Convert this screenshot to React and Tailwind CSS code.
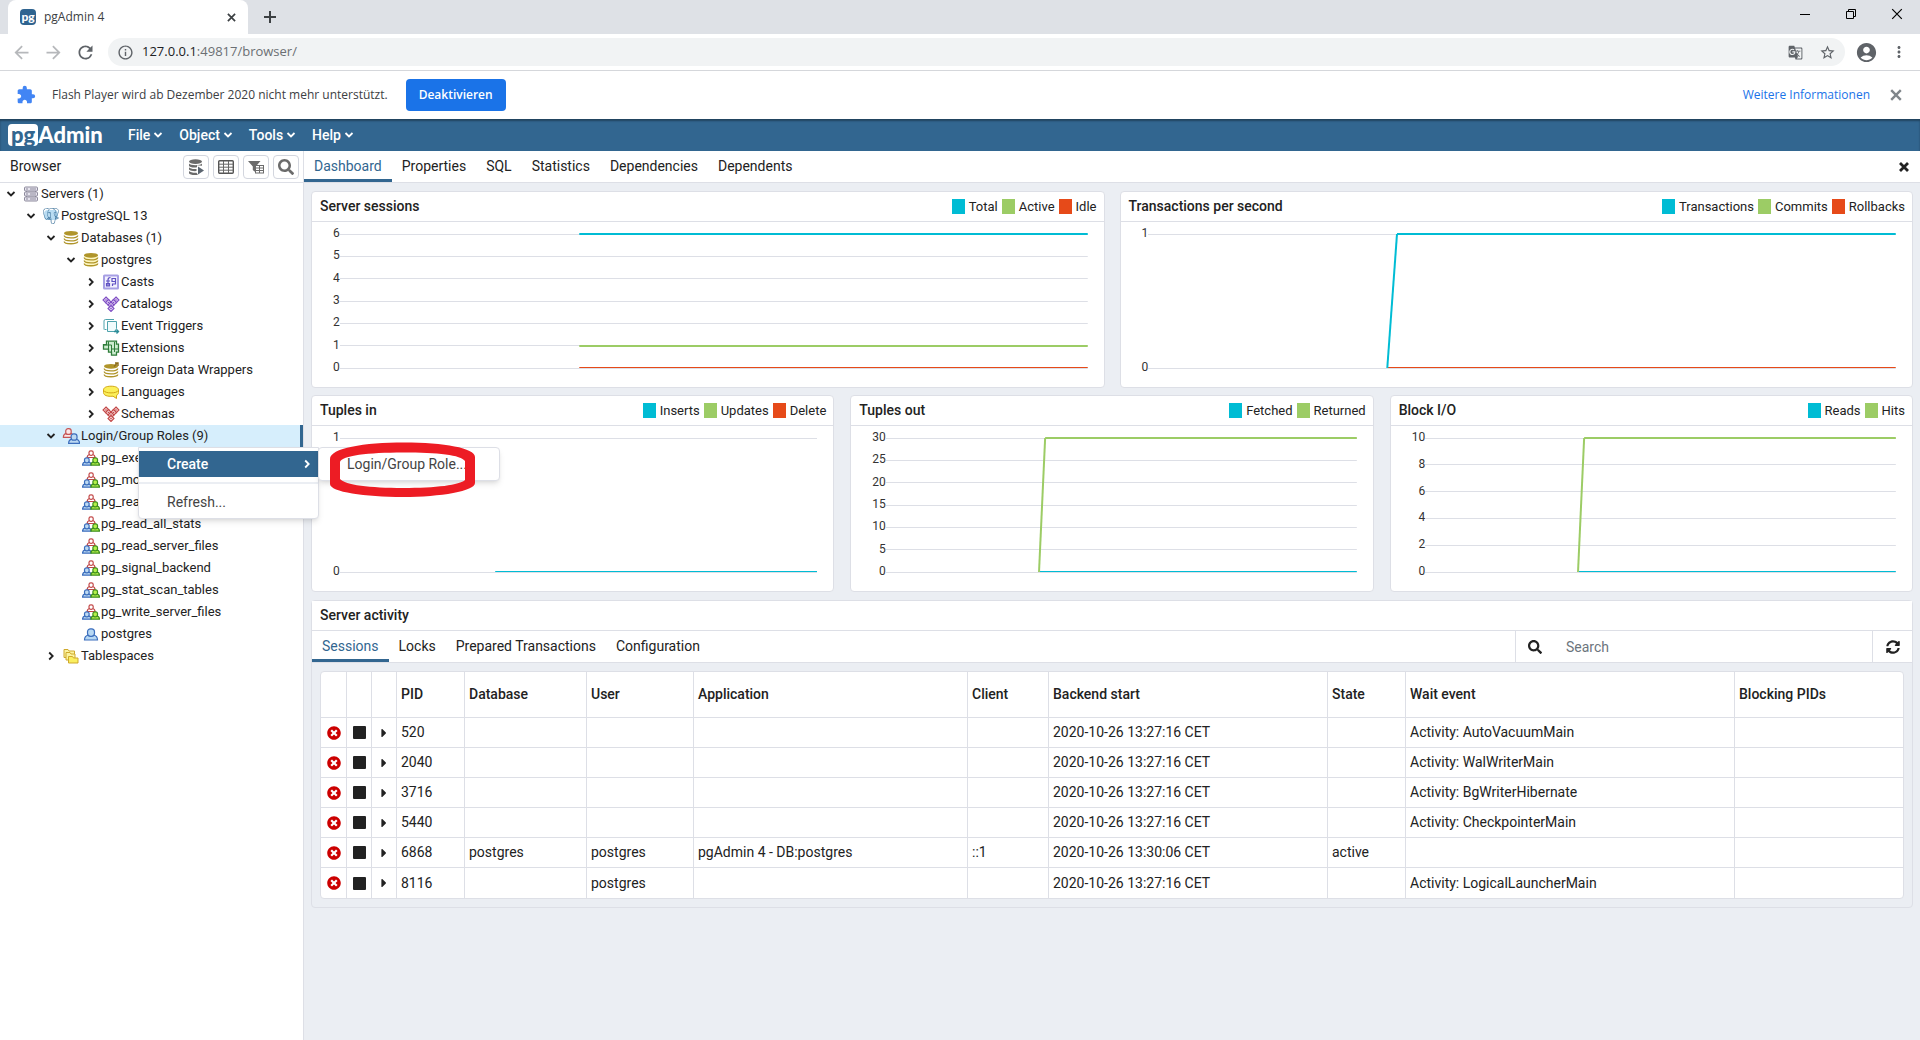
import React from "react";
import {
  MdArrowBack,
  MdArrowForward,
  MdRefresh,
  MdInfoOutline,
  MdStarBorder,
  MdAccountCircle,
  MdExtension,
  MdMoreVert,
  MdGTranslate,
} from "react-icons/md";
import { FaSearch, FaSyncAlt, FaTimesCircle, FaCaretRight } from "react-icons/fa";
import { SiPostgresql } from "react-icons/si";

const CYAN = "#00bcd4";
const GREEN = "#9ccc65";
const ORANGE = "#e64a19";

/* ---------- small drawings ---------- */

function Cross({ size = 10, stroke = 2, className = "" }) {
  return (
    <svg width={size} height={size} viewBox="0 0 10 10" className={className} aria-hidden="true">
      <path d="M1 1 9 9M9 1 1 9" stroke="currentColor" strokeWidth={stroke} fill="none" />
    </svg>
  );
}

function Chevron({ open, className = "" }) {
  return (
    <svg width="10" height="10" viewBox="0 0 10 10" className={className} aria-hidden="true">
      <path
        d={open ? "M1.5 3 5 6.5 8.5 3" : "M3.2 1.5 6.7 5 3.2 8.5"}
        stroke="currentColor"
        strokeWidth="1.8"
        fill="none"
      />
    </svg>
  );
}

function Glyph({ children }) {
  return (
    <svg width="18" height="16" viewBox="0 0 18 16" className="shrink-0" aria-hidden="true">
      {children}
    </svg>
  );
}

function Disks({ top = 1, light = false }) {
  return (
    <g>
      <path
        d={`M2.5 ${top + 2}v9.5c0 3 13 3 13 0v-9.5z`}
        fill={light ? "#fdf6bf" : "#fff"}
        stroke="none"
      />
      <ellipse cx="9" cy={top + 2.3} rx="7" ry="2.4" fill="#b0952b" />
      {[4.6, 7.6, 10.4].map((y) => (
        <path
          key={y}
          d={`M2.2 ${top + y}c0 3.1 13.6 3.1 13.6 0`}
          stroke="#b0952b"
          strokeWidth="1.3"
          fill="none"
        />
      ))}
    </g>
  );
}

function Person({ x, y, s = 1, stroke, fill }) {
  return (
    <g transform={`translate(${x} ${y}) scale(${s})`} stroke={stroke} fill={fill} strokeWidth={1.2 / s}>
      <path d="M0.500 12c0-3 1.500-4.500 4-5h5c2.500.5 4 2 4 5z" />
      <rect x="3.500" y="0.800" width="7" height="7.500" rx="3" />
    </g>
  );
}

function Diamonds({ stroke, fill }) {
  const spots = [
    [4, 4],
    [14, 4],
    [6.5, 6.5],
    [11.5, 6.5],
    [9, 9],
    [9, 12.5],
  ];
  return (
    <g fill={fill} stroke={stroke} strokeWidth="1.1">
      {spots.map(([x, y]) => (
        <path key={`${x}-${y}`} d={`M${x} ${y - 3}l3 3-3 3-3-3z`} />
      ))}
      {spots.map(([x, y]) => (
        <circle key={`${x}.${y}`} cx={x} cy={y} r="0.8" fill={stroke} stroke="none" />
      ))}
    </g>
  );
}

const treeIcons = {
  servers: (
    <Glyph>
      <path d="M4.500 2v12M13.500 2v12" stroke="#8d8a9c" />
      {[0.5, 5.5, 10.5].map((y) => (
        <g key={y}>
          <rect x="2.500" y={y + 0.5} width="13" height="4" rx="1" fill="#e6e4ee" stroke="#8d8a9c" />
          <path d={`M4 ${y + 2.5}h2M8 ${y + 2.5}h6`} stroke="#8d8a9c" />
        </g>
      ))}
    </Glyph>
  ),
  elephant: (
    <span className="relative flex h-4 w-[18px] shrink-0 items-center justify-center text-[#2f6792]">
      <span className="absolute inset-x-0.5 top-0.5 h-2.5 rounded bg-[#b9dcf2]" />
      <SiPostgresql size={16} className="relative" />
    </span>
  ),
  databases: (
    <Glyph>
      <Disks />
    </Glyph>
  ),
  database: (
    <Glyph>
      <Disks light />
    </Glyph>
  ),
  casts: (
    <Glyph>
      <rect x="1" y="0.500" width="16" height="15" rx="1.500" fill="#a79fe4" />
      <rect x="3" y="2.500" width="12" height="11" fill="#f3f1fd" />
      <path
        d="M8.500 3.500c-2 0-2.500 1-2.500 2.500v5.500M4 7h4M4.500 9.500h3v2.500h-3zM10 4.500h3.500v3h-3.500zM13.500 7.500v2.500h-3v2"
        stroke="#5f51c2"
        strokeWidth="1.200"
        fill="none"
      />
    </Glyph>
  ),
  catalogs: (
    <Glyph>
      <Diamonds stroke="#7f4fc3" fill="#e4d4f7" />
    </Glyph>
  ),
  events: (
    <Glyph>
      <path d="M12 1.500H3.500Q2 1.500 2 3v8.500M2.500 11.500h2" stroke="#4fa3ad" fill="none" />
      <path d="M5.500 3.500h9v7l-1.500 3h-7.500z" fill="#f0fbfc" stroke="#4fa3ad" />
      <path d="M12 13.500h4M14.500 11.500l2 2-2 2" stroke="#2b8c98" strokeWidth="1.400" fill="none" />
    </Glyph>
  ),
  extensions: (
    <Glyph>
      <path
        d="M4.500 1.200h10v3h2v8h-2v3h-5v-3h-3v-3h-5v-4.500h3z"
        fill="#cdeccf"
        stroke="#2f7d3a"
        strokeWidth="1.300"
      />
      <path d="M1.500 5h8M6.500 1.500v8M9.500 5v7M9.500 9h6.500M12.500 2v10" stroke="#2f7d3a" fill="none" />
    </Glyph>
  ),
  wrappers: (
    <Glyph>
      <Disks top={2} />
      <path d="M12 4.500l3-3M13 1h3v3" stroke="#8d6d1c" strokeWidth="1.400" fill="none" />
    </Glyph>
  ),
  languages: (
    <Glyph>
      <path
        d="M9 2.200c5 0 7.500 1.500 7.500 3.800v2.500c0 1.500-.8 2.200-2 2.800v3.200l-3.500-2.300c-6 .6-9.500-1-9.500-3.700v-2.500c0-2.300 2.500-3.800 7.500-3.800z"
        fill="#fcf05a"
        stroke="#d3a818"
      />
      <path d="M1.800 6.500c1 3.200 13.400 3.200 14.400 0" stroke="#d3a818" fill="none" />
    </Glyph>
  ),
  schemas: (
    <Glyph>
      <Diamonds stroke="#c24848" fill="#f9dada" />
    </Glyph>
  ),
  roles: (
    <Glyph>
      <Person x={1} y={0} s={0.78} stroke="#c45454" fill="#fbe6e6" />
      <Person x={6.2} y={5.2} s={0.84} stroke="#3c6ebd" fill="#bcd9f2" />
    </Glyph>
  ),
  group: (
    <Glyph>
      <path d="M5 7l4-1.500 4 1.500" stroke="#c24848" fill="none" />
      <Person x={4.9} y={0.3} s={0.6} stroke="#c24848" fill="#fff" />
      <Person x={0.2} y={7.3} s={0.66} stroke="#3c6ebd" fill="#bcd9f2" />
      <Person x={8.6} y={7.3} s={0.66} stroke="#3f8f1f" fill="#b4f04a" />
    </Glyph>
  ),
  user: (
    <Glyph>
      <Person x={2} y={2} s={1} stroke="#3c6ebd" fill="#b7d8f3" />
    </Glyph>
  ),
  tablespaces: (
    <Glyph>
      <path d="M2 1.500h4l1 1.500h5.500v6.500H2z" fill="#fbf3a0" stroke="#cfa92c" />
      <path d="M4 4.500h4l1 1.500h4v6H4z" fill="#fbf3a0" stroke="#cfa92c" />
      <path d="M6.500 8.500h4l1 1.500h4.500v5H6.500z" fill="#faef60" stroke="#cfa92c" />
    </Glyph>
  ),
};

/* ---------- browser chrome ---------- */

function TitleBar() {
  return (
    <header className="flex h-[34px] items-start justify-between bg-[#dee1e6] pl-2">
      <div className="flex h-full items-center">
        <div className="flex h-full w-60 items-center rounded-t-lg bg-white px-3">
          <span className="flex size-4 items-center justify-center rounded-sm bg-[#2f6490] font-[Lato] text-[12px] leading-none font-black text-white">
            pg
          </span>
          <span className="ml-2 flex-1 text-[12px] text-[#3c4043]">pgAdmin 4</span>
          <button type="button" aria-label="Tab schließen" className="text-[#3c4043]">
            <Cross size={9} stroke={1.9} />
          </button>
        </div>
        <button type="button" aria-label="Neuer Tab" className="ml-4 text-[#3c4043]">
          <svg width="12" height="12" viewBox="0 0 12 12" aria-hidden="true">
            <path d="M6 0v12M0 6h12" stroke="currentColor" strokeWidth="2" />
          </svg>
        </button>
      </div>
      <div className="flex h-7 items-center text-black">
        <button type="button" aria-label="Minimieren" className="flex w-[46px] justify-center">
          <svg width="10" height="10" aria-hidden="true">
            <path d="M0 5.500h10" stroke="currentColor" />
          </svg>
        </button>
        <button type="button" aria-label="Wiederherstellen" className="flex w-[46px] justify-center">
          <svg width="10" height="10" aria-hidden="true">
            <path d="M.5 2.500h7v7h-7zM2.500 2.500v-2h7v7h-2" stroke="currentColor" fill="none" />
          </svg>
        </button>
        <button type="button" aria-label="Schließen" className="flex w-[46px] justify-center">
          <Cross size={12} stroke={1} />
        </button>
      </div>
    </header>
  );
}

function AddressBar() {
  return (
    <div className="flex h-[37px] items-center border-b border-[#d5d7db] bg-white pr-3 pl-[11px] text-[#5f6368]">
      <button type="button" aria-label="Zurück" className="text-[#b6b8bb]">
        <MdArrowBack size={21} />
      </button>
      <button type="button" aria-label="Vorwärts" className="ml-[11px] text-[#b6b8bb]">
        <MdArrowForward size={21} />
      </button>
      <button type="button" aria-label="Neu laden" className="ml-[11px]">
        <MdRefresh size={21} />
      </button>
      <div className="ml-3 flex h-7 flex-1 items-center rounded-full bg-[#f1f3f4] px-[9px]">
        <MdInfoOutline size={17} />
        <a href="#browser" className="ml-2 flex-1 text-[13px] text-[#6b6f73]">
          <span className="text-[#202124]">127.0.0.1</span>:49817/browser/
        </a>
        <button type="button" aria-label="Übersetzen">
          <MdGTranslate size={15} />
        </button>
        <button type="button" aria-label="Lesezeichen" className="ml-4">
          <MdStarBorder size={17} />
        </button>
      </div>
      <button type="button" aria-label="Profil" className="ml-[10px]">
        <MdAccountCircle size={23} />
      </button>
      <button type="button" aria-label="Menü" className="ml-3">
        <MdMoreVert size={18} />
      </button>
    </div>
  );
}

function InfoBar() {
  return (
    <div className="flex h-12 items-center bg-white pr-[18px] pl-4 text-[12px]">
      <MdExtension size={20} className="text-[#4285f4]" />
      <span className="ml-4 text-[#3c4043]">
        Flash Player wird ab Dezember 2020 nicht mehr unterstützt.
      </span>
      <button type="button" className="ml-[18px] h-8 rounded bg-[#1a73e8] px-[13px] font-semibold text-white">
        Deaktivieren
      </button>
      <a href="#info" className="ml-auto text-[#1a73e8]">
        Weitere Informationen
      </a>
      <button type="button" aria-label="Hinweis schließen" className="ml-5 text-[#80868b]">
        <Cross size={12} stroke={2} />
      </button>
    </div>
  );
}

function AppMenu() {
  return (
    <nav
      aria-label="pgAdmin"
      className="flex h-8 items-center bg-[#326690] pl-2 text-[14px] font-medium text-white shadow-[inset_0_2px_2px_rgba(0,0,0,0.35)]"
    >
      <a href="#home" className="mr-[16px] flex w-24 items-center font-[Lato] text-[22px] leading-[22px] font-black">
        <span className="rounded bg-white px-[3px] text-[#326690]">pg</span>
        <span>Admin</span>
      </a>
      {["File", "Object", "Tools", "Help"].map((m) => (
        <button type="button" key={m} className="flex items-center gap-[3px] px-2">
          {m}
          <Chevron open />
        </button>
      ))}
    </nav>
  );
}

/* ---------- object tree ---------- */

const toolButtons = [
  [
    "Query tool",
    <svg width="16" height="16" viewBox="0 0 16 16" key="q" aria-hidden="true">
      <ellipse cx="7.500" cy="2.600" rx="6.500" ry="2.300" fill="#6b6b6b" />
      <path
        d="M1 4.500c1 2.200 12 2.200 13 0v2.300l-5-.5v2c-4 .6-7.500-.2-8-1.300zM1 8.200c1 1.600 4.500 2 7.500 1.700v2.200c-3 .2-6.500-.2-7.500-1.600zM1 12c1 1.500 4.500 1.800 7.500 1.700l1.500 2c-4 .6-8.500.1-9-1.500z"
        fill="#6b6b6b"
      />
      <path d="M10 7.500l6 4-6 4z" fill="#5b6570" />
    </svg>,
  ],
  [
    "View data",
    <svg width="16" height="14" viewBox="0 0 16 14" key="v" aria-hidden="true">
      <rect x=".7" y=".7" width="14.600" height="12.600" rx="1" fill="none" stroke="#555" strokeWidth="1.400" />
      <path d="M1 4.200h14M1 7.200h14M1 10.200h14M5.500 1v12M10.500 1v12" stroke="#666" />
    </svg>,
  ],
  [
    "Filtered rows",
    <svg width="16" height="14" viewBox="0 0 16 14" key="f" aria-hidden="true">
      <path d="M0 1h12.500L7.800 6.500v6L4.800 10V6.500z" fill="#6b6b6b" />
      <rect x="7.500" y="5.500" width="8" height="7.500" fill="#fff" stroke="#6b6b6b" />
      <path d="M8 8h7M8 10.500h7M11.500 6v7" stroke="#6b6b6b" />
    </svg>,
  ],
  ["Search objects", <FaSearch size={16} key="s" color="#6b6b6b" />],
];

const tree = [
  [0, "servers", "Servers (1)", true],
  [1, "elephant", "PostgreSQL 13", true],
  [2, "databases", "Databases (1)", true],
  [3, "database", "postgres", true],
  [4, "casts", "Casts", false],
  [4, "catalogs", "Catalogs", false],
  [4, "events", "Event Triggers", false],
  [4, "extensions", "Extensions", false],
  [4, "wrappers", "Foreign Data Wrappers", false],
  [4, "languages", "Languages", false],
  [4, "schemas", "Schemas", false],
  [2, "roles", "Login/Group Roles (9)", true, true],
  [3, "group", "pg_execute_server_program"],
  [3, "group", "pg_monitor"],
  [3, "group", "pg_read_all_settings"],
  [3, "group", "pg_read_all_stats"],
  [3, "group", "pg_read_server_files"],
  [3, "group", "pg_signal_backend"],
  [3, "group", "pg_stat_scan_tables"],
  [3, "group", "pg_write_server_files"],
  [3, "user", "postgres"],
  [2, "tablespaces", "Tablespaces", false],
];

function ContextMenu() {
  return (
    <div className="absolute top-full left-[138px] z-20 w-[181px] rounded-b border border-[#dddfe6] bg-white py-[3px] text-[14px] text-[#444] shadow-md">
      <button
        type="button"
        className="flex h-[26px] w-full items-center justify-between bg-[#326690] pr-1.5 pl-7 font-medium text-white"
      >
        Create
        <Chevron />
      </button>
      <hr className="my-[5px] border-t-2 border-[#ebeef3]" />
      <button type="button" className="mt-1 flex h-[26px] w-full items-center pl-7">
        Refresh...
      </button>
      <div className="absolute -top-px left-full w-[182px] rounded border border-[#dddfe6] bg-white py-[3px] shadow-md">
        <button type="button" className="flex h-[26px] w-full items-center pl-7">
          Login/Group Role...
        </button>
        <svg
          width="146"
          height="56"
          viewBox="0 0 146 56"
          className="pointer-events-none absolute -top-1.5 left-[11px]"
          aria-hidden="true"
        >
          <path
            fillRule="evenodd"
            fill="#ed1c24"
            d="M0 17C0 6 34 .5 74 .5S145 6 145 15v26c0 8-34 14-72 14S0 50 0 42zM10 20v17c5 6 30 9 63 9s57-3 62-8V19c-4-6-27-8.500-62-8.500S12 13.500 10 20z"
          />
        </svg>
      </div>
    </div>
  );
}

const indents = ["pl-0", "pl-5", "pl-10", "pl-[60px]", "pl-20"];

function TreeRow({ level, icon, label, open, selected }) {
  return (
    <li
      className={
        selected
          ? "relative border-r-[3px] border-[#326690] bg-[#d6eefc]"
          : "border-r-[3px] border-transparent"
      }
    >
      <button type="button" className={`flex h-[22px] w-full items-center ${indents[level]}`}>
        <span className="flex w-[22px] shrink-0 justify-center">
          {open !== undefined && <Chevron open={open} />}
        </span>
        {treeIcons[icon]}
        <span className="ml-px whitespace-nowrap">{label}</span>
      </button>
      {selected && <ContextMenu />}
    </li>
  );
}

function Sidebar() {
  return (
    <aside className="w-[304px] shrink-0 border-r border-[#dddfe6] bg-white">
      <div className="flex h-8 items-center gap-1 border-b border-[#dddfe6] pr-1 pl-[10px]">
        <h2 className="flex-1 text-[14px]">Browser</h2>
        {toolButtons.map(([name, icon]) => (
          <button
            type="button"
            key={name}
            aria-label={name}
            className="flex h-6 w-[26px] items-center justify-center rounded border border-[#d3d6de]"
          >
            {icon}
          </button>
        ))}
      </div>
      <ul className="text-[13px]">
        {tree.map(([level, icon, label, open, selected], i) => (
          <TreeRow key={i} level={level} icon={icon} label={label} open={open} selected={selected} />
        ))}
      </ul>
    </aside>
  );
}

/* ---------- dashboard ---------- */

function Tabs({ items, label }) {
  return (
    <div role="tablist" aria-label={label} className="flex h-full text-[14px]">
      {items.map((t, i) => (
        <button
          type="button"
          role="tab"
          aria-selected={i === 0}
          key={t}
          className={
            i === 0
              ? "border-b-[3px] border-[#326690] px-[10px] pt-[2px] text-[#326690]"
              : "border-b-[3px] border-transparent px-[10px] pt-[2px]"
          }
        >
          {t}
        </button>
      ))}
    </div>
  );
}

const TOP = 7;
const SPAN = 134;

function ChartCard({ title, legend, ticks, children }) {
  return (
    <section className="h-[197px] rounded border border-[#dddfe6] bg-white">
      <div className="flex h-[30px] items-center justify-between border-b border-[#dddfe6] pr-[7px] pl-2 text-[13px]">
        <h3 className="text-[14px] font-medium">{title}</h3>
        <ul className="flex gap-1">
          {legend.map(([name, box]) => (
            <li key={name} className="flex items-center gap-1">
              <span className={`h-[15px] w-[13px] ${box}`} />
              {name}
            </li>
          ))}
        </ul>
      </div>
      <div className="flex pt-[5px] pr-4 pl-[21px]">
        <div className="flex h-[146px] flex-col justify-between text-right text-[12px] leading-3 text-[#333]">
          {ticks.map((t) => (
            <span key={t}>{t}</span>
          ))}
        </div>
        <svg className="h-[146px] min-w-0 flex-1" role="img" aria-label={title}>
          {ticks.map((t, i) => {
            const y = TOP + 0.5 + Math.floor((i * SPAN) / (ticks.length - 1));
            return <line key={t} x1="0" x2="100%" y1={y} y2={y} stroke="#dddfe6" />;
          })}
          {children}
        </svg>
      </div>
    </section>
  );
}

function Flat({ from, y, color, width = 2 }) {
  return <line x1={from} x2="100%" y1={y} y2={y} stroke={color} strokeWidth={width} />;
}

function Rise({ from, to, color }) {
  return (
    <>
      <line x1={from} x2={to} y1={TOP + SPAN} y2={TOP} stroke={color} strokeWidth="2" />
      <Flat from={to} y={TOP} color={color} />
    </>
  );
}

const CY = "bg-[#00bcd4]";
const GR = "bg-[#9ccc65]";
const OR = "bg-[#e64a19]";

const columns = [
  ["", "w-[26px]"],
  ["", "w-[25px]"],
  ["", "w-[25px]"],
  ["PID", "w-[68px]"],
  ["Database", "w-[122px]"],
  ["User", "w-[107px]"],
  ["Application", "w-[274px]"],
  ["Client", "w-[81px]"],
  ["Backend start", "w-[279px]"],
  ["State", "w-[78px]"],
  ["Wait event", "w-[329px]"],
  ["Blocking PIDs", ""],
];

const start = "2020-10-26 13:27:16 CET";
const rows = [
  ["520", "", "", "", "", start, "", "Activity: AutoVacuumMain", ""],
  ["2040", "", "", "", "", start, "", "Activity: WalWriterMain", ""],
  ["3716", "", "", "", "", start, "", "Activity: BgWriterHibernate", ""],
  ["5440", "", "", "", "", start, "", "Activity: CheckpointerMain", ""],
  ["6868", "postgres", "postgres", "pgAdmin 4 - DB:postgres", "::1", "2020-10-26 13:30:06 CET", "active", "", ""],
  ["8116", "", "postgres", "", "", start, "", "Activity: LogicalLauncherMain", ""],
];

const iconCell = "border-r border-b border-[#dddfe6] group-last:border-b-0";

function ActivityTable() {
  return (
    <div className="m-2 overflow-hidden rounded border border-[#dddfe6] bg-white">
      <table className="w-full table-fixed border-separate border-spacing-0 text-left text-[14px]">
        <colgroup>
          {columns.map(([, w], i) => (
            <col key={i} className={w} />
          ))}
        </colgroup>
        <thead>
          <tr className="h-[46px]">
            {columns.map(([name], i) => (
              <th
                key={i}
                scope="col"
                className="border-r border-b border-[#dddfe6] px-1 font-medium last:border-r-0"
              >
                {name}
              </th>
            ))}
          </tr>
        </thead>
        <tbody>
          {rows.map((r) => (
            <tr key={r[0]} className="group h-[30px]">
              <td className={iconCell}>
                <button type="button" aria-label={`Terminate ${r[0]}`} className="flex w-full justify-center text-[#c00]">
                  <FaTimesCircle size={14} />
                </button>
              </td>
              <td className={iconCell}>
                <button type="button" aria-label={`Cancel ${r[0]}`} className="flex w-full justify-center">
                  <span className="size-[13px] rounded-[1px] bg-[#222]" />
                </button>
              </td>
              <td className={iconCell}>
                <button type="button" aria-label={`Details ${r[0]}`} className="flex w-full justify-center">
                  <FaCaretRight size={14} />
                </button>
              </td>
              {r.map((c, i) => (
                <td
                  key={i}
                  className="overflow-hidden border-r border-b border-[#dddfe6] px-1 whitespace-nowrap group-last:border-b-0 last:border-r-0"
                >
                  {c}
                </td>
              ))}
            </tr>
          ))}
        </tbody>
      </table>
    </div>
  );
}

function Dashboard() {
  return (
    <main className="flex min-w-0 flex-1 flex-col">
      <div className="flex h-8 items-center justify-between border-b border-[#dddfe6] bg-white pr-[11px]">
        <Tabs
          label="Main"
          items={["Dashboard", "Properties", "SQL", "Statistics", "Dependencies", "Dependents"]}
        />
        <button type="button" aria-label="Close panel">
          <Cross size={10} stroke={2.8} />
        </button>
      </div>
      <div className="px-[7px] pt-2">
        <div className="mb-[7px] grid grid-cols-2 gap-[15px]">
          <ChartCard
            title="Server sessions"
            legend={[["Total", CY], ["Active", GR], ["Idle", OR]]}
            ticks={[6, 5, 4, 3, 2, 1, 0]}
          >
            <Flat from="32%" y={TOP} color={CYAN} />
            <Flat from="32%" y={TOP + 112} color={GREEN} />
            <Flat from="32%" y={TOP + SPAN - 0.5} color={ORANGE} width={1} />
          </ChartCard>
          <ChartCard
            title="Transactions per second"
            legend={[["Transactions", CY], ["Commits", GR], ["Rollbacks", OR]]}
            ticks={[1, 0]}
          >
            <Flat from="32%" y={TOP + SPAN - 0.5} color={ORANGE} width={1} />
            <Rise from="32%" to="33.3%" color={CYAN} />
          </ChartCard>
        </div>
        <div className="mb-2 grid grid-cols-3 gap-4">
          <ChartCard
            title="Tuples in"
            legend={[["Inserts", CY], ["Updates", GR], ["Delete", OR]]}
            ticks={[1, 0]}
          >
            <Flat from="32.500%" y={TOP + SPAN - 0.5} color={CYAN} width={1} />
          </ChartCard>
          <ChartCard
            title="Tuples out"
            legend={[["Fetched", CY], ["Returned", GR]]}
            ticks={[30, 25, 20, 15, 10, 5, 0]}
          >
            <Flat from="32.500%" y={TOP + SPAN - 0.5} color={CYAN} width={1} />
            <Rise from="32.500%" to="33.800%" color={GREEN} />
          </ChartCard>
          <ChartCard title="Block I/O" legend={[["Reads", CY], ["Hits", GR]]} ticks={[10, 8, 6, 4, 2, 0]}>
            <Flat from="32.500%" y={TOP + SPAN - 0.5} color={CYAN} width={1} />
            <Rise from="32.500%" to="33.800%" color={GREEN} />
          </ChartCard>
        </div>
        <section className="rounded border border-[#dddfe6]">
          <h3 className="flex h-[30px] items-center border-b border-[#dddfe6] bg-white px-2 text-[14px] font-medium">
            Server activity
          </h3>
          <div className="flex h-8 items-center justify-between border-b border-[#dddfe6] bg-white">
            <Tabs label="Activity" items={["Sessions", "Locks", "Prepared Transactions", "Configuration"]} />
            <div className="flex h-full w-[397px] items-center border-l border-[#dddfe6] text-[14px]">
              <label htmlFor="activity-search" className="px-3">
                <FaSearch size={14} aria-label="Search" />
              </label>
              <input
                id="activity-search"
                type="search"
                placeholder="Search"
                className="h-full min-w-0 flex-1 px-3 outline-none placeholder:text-[#6c757d]"
              />
              <button
                type="button"
                aria-label="Refresh"
                className="flex h-full w-10 items-center justify-center border-l border-[#dddfe6]"
              >
                <FaSyncAlt size={14} />
              </button>
            </div>
          </div>
          <ActivityTable />
        </section>
      </div>
    </main>
  );
}

export default function App() {
  return (
    <div className="flex min-h-screen flex-col bg-[#ebeef3] font-['Open_Sans',sans-serif]">
      <TitleBar />
      <AddressBar />
      <InfoBar />
      <div className="flex flex-1 flex-col font-[Roboto,sans-serif] text-[#222]">
        <AppMenu />
        <div className="flex flex-1">
          <Sidebar />
          <Dashboard />
        </div>
      </div>
    </div>
  );
}
